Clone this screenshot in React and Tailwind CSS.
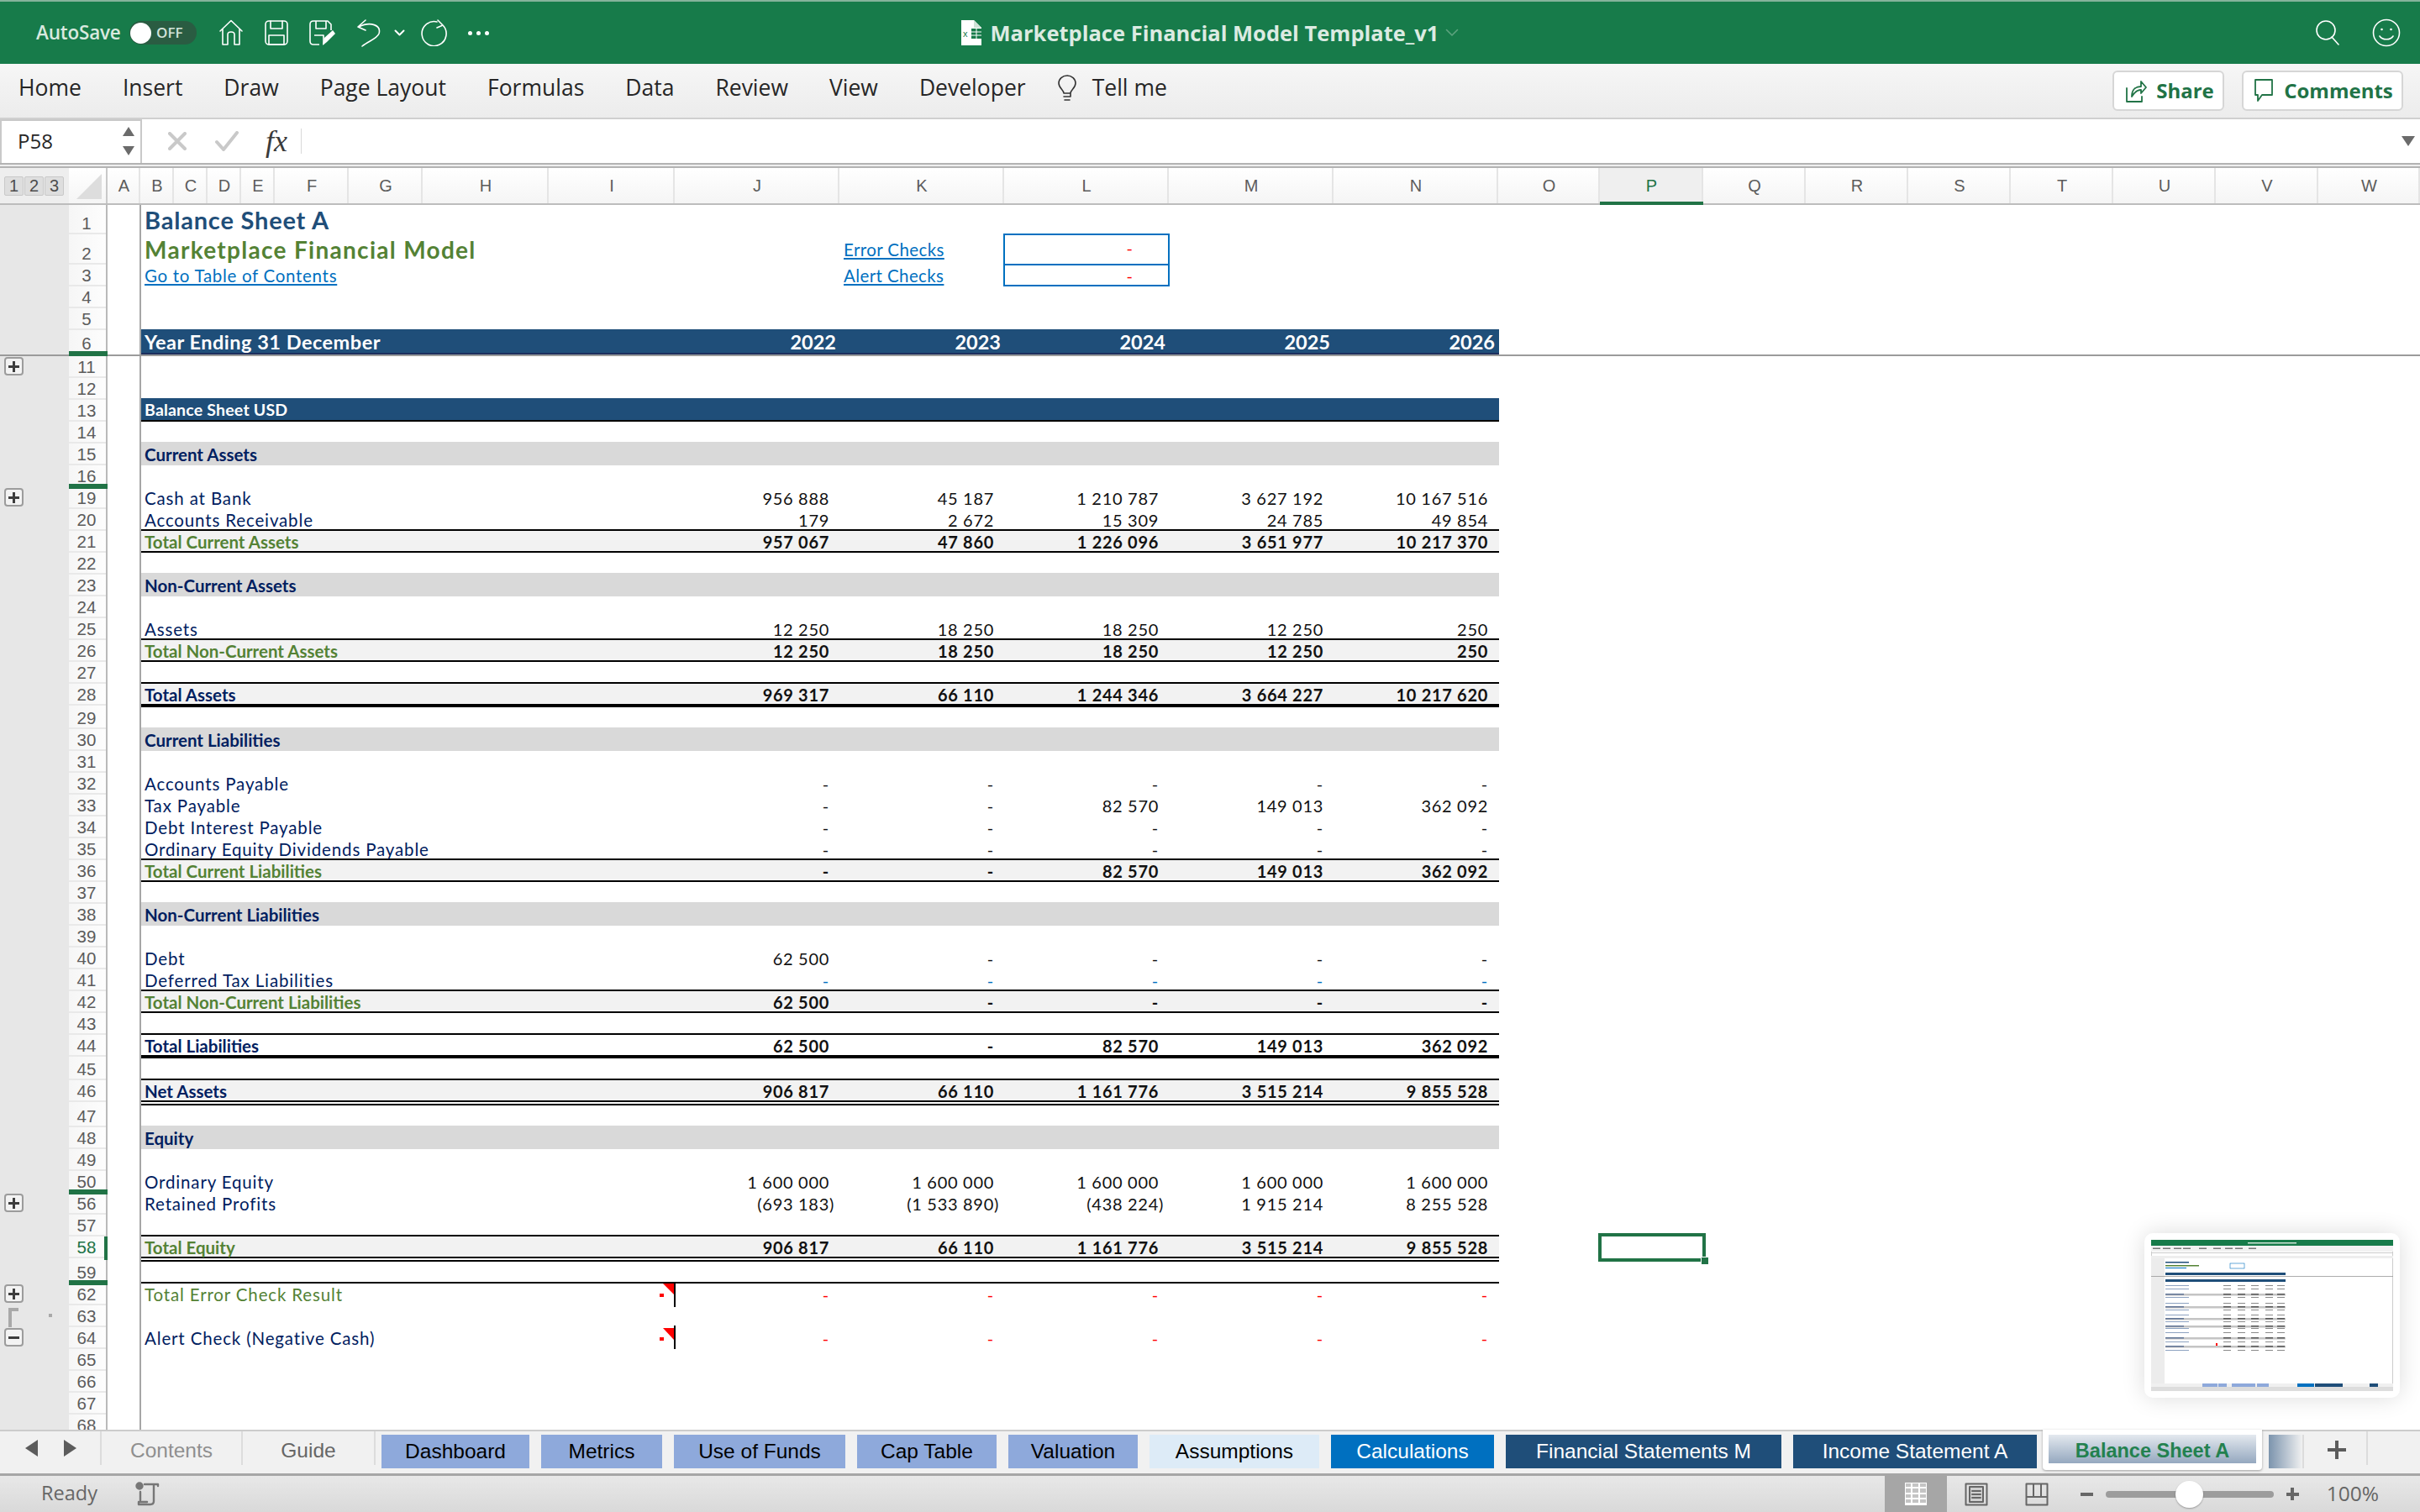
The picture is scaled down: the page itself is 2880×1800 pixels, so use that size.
import React from 'react';

const COLUMNS = [
  ['A', 'w-[39px]'], ['B', 'w-[40px]'], ['C', 'w-[40px]'], ['D', 'w-[40px]'], ['E', 'w-[40px]'],
  ['F', 'w-[88px]'], ['G', 'w-[88px]'], ['H', 'w-[150px]'], ['I', 'w-[150px]'], ['J', 'w-[196px]'],
  ['K', 'w-[196px]'], ['L', 'w-[196px]'], ['M', 'w-[196px]'], ['N', 'w-[196px]'], ['O', 'w-[121px]'],
  ['P', 'w-[123px]'], ['Q', 'w-[122px]'], ['R', 'w-[122px]'], ['S', 'w-[122px]'], ['T', 'w-[122px]'],
  ['U', 'w-[122px]'], ['V', 'w-[122px]'], ['W', 'w-[121px]'],
];

const TABS = [
  ['Dashboard', 'w-[176px] ml-[7px] bg-[#8ea9db] text-black'],
  ['Metrics', 'w-[144px] ml-[14px] bg-[#8ea9db] text-black'],
  ['Use of Funds', 'w-[204px] ml-[14px] bg-[#8ea9db] text-black'],
  ['Cap Table', 'w-[166px] ml-[14px] bg-[#8ea9db] text-black'],
  ['Valuation', 'w-[154px] ml-[14px] bg-[#8ea9db] text-black'],
  ['Assumptions', 'w-[202px] ml-[14px] bg-[#ddebf7] text-black'],
  ['Calculations', 'w-[194px] ml-[14px] bg-[#0070c0] text-white'],
  ['Financial Statements M', 'w-[328px] ml-[14px] bg-[#1f4e79] text-white'],
  ['Income Statement A', 'w-[290px] ml-[14px] bg-[#1f4e79] text-white'],
];

const D = ['-', '-', '-', '-', '-'];

const ROWS = [
  { n: 11, outline: '+' },
  { n: 12 },
  { n: 13, kind: 'band', label: 'Balance Sheet USD' },
  { n: 14 },
  { n: 15, kind: 'section', label: 'Current Assets' },
  { n: 16, hidden: true },
  { n: 19, outline: '+', label: 'Cash at Bank', v: ['956 888', '45 187', '1 210 787', '3 627 192', '10 167 516'] },
  { n: 20, line: true, label: 'Accounts Receivable', v: ['179', '2 672', '15 309', '24 785', '49 854'] },
  { n: 21, kind: 'sub', label: 'Total Current Assets', v: ['957 067', '47 860', '1 226 096', '3 651 977', '10 217 370'] },
  { n: 22 },
  { n: 23, kind: 'section', label: 'Non-Current Assets' },
  { n: 24 },
  { n: 25, line: true, label: 'Assets', v: ['12 250', '18 250', '18 250', '12 250', '250'] },
  { n: 26, kind: 'sub', label: 'Total Non-Current Assets', v: ['12 250', '18 250', '18 250', '12 250', '250'] },
  { n: 27, line: true },
  { n: 28, kind: 'total', fill: true, label: 'Total Assets', v: ['969 317', '66 110', '1 244 346', '3 664 227', '10 217 620'] },
  { n: 29 },
  { n: 30, kind: 'section', label: 'Current Liabilities' },
  { n: 31 },
  { n: 32, label: 'Accounts Payable', v: D },
  { n: 33, label: 'Tax Payable', v: ['-', '-', '82 570', '149 013', '362 092'] },
  { n: 34, label: 'Debt Interest Payable', v: D },
  { n: 35, line: true, label: 'Ordinary Equity Dividends Payable', v: D },
  { n: 36, kind: 'sub', label: 'Total Current Liabilities', v: ['-', '-', '82 570', '149 013', '362 092'] },
  { n: 37 },
  { n: 38, kind: 'section', label: 'Non-Current Liabilities' },
  { n: 39 },
  { n: 40, label: 'Debt', v: ['62 500', '-', '-', '-', '-'] },
  { n: 41, line: true, label: 'Deferred Tax Liabilities', v: D, tone: 'text-[#0070c0]' },
  { n: 42, kind: 'sub', label: 'Total Non-Current Liabilities', v: ['62 500', '-', '-', '-', '-'] },
  { n: 43, line: true },
  { n: 44, kind: 'total', label: 'Total Liabilities', v: ['62 500', '-', '82 570', '149 013', '362 092'] },
  { n: 45, line: true },
  { n: 46, kind: 'double', label: 'Net Assets', v: ['906 817', '66 110', '1 161 776', '3 515 214', '9 855 528'] },
  { n: 47 },
  { n: 48, kind: 'section', label: 'Equity' },
  { n: 49 },
  { n: 50, hidden: true, label: 'Ordinary Equity', v: ['1 600 000', '1 600 000', '1 600 000', '1 600 000', '1 600 000'] },
  { n: 56, outline: '+', label: 'Retained Profits', v: ['(693 183)', '(1 533 890)', '(438 224)', '1 915 214', '8 255 528'] },
  { n: 57, line: true },
  { n: 58, kind: 'double', green: true, selected: true, label: 'Total Equity', v: ['906 817', '66 110', '1 161 776', '3 515 214', '9 855 528'] },
  { n: 59, line: true, hidden: true },
  { n: 62, outline: '+', flag: 'flagA', labelTone: 'text-[#548235] tracking-[0.3px]', label: 'Total Error Check Result', v: D, tone: 'text-[#ff0000]' },
  { n: 63, bracket: true },
  { n: 64, outline: '-', flag: 'flagB', label: 'Alert Check (Negative Cash)', v: D, tone: 'text-[#ff0000]' },
  { n: 65 },
  { n: 66 },
  { n: 67 },
  { n: 68 },
];

const LABEL = "font-['Lato',sans-serif] text-[20.5px] tracking-[0.85px] whitespace-nowrap";
const LINK = "font-['Lato',sans-serif] text-[20.5px] tracking-[0.4px] whitespace-nowrap text-[#0070c0] underline";
const BOLD = "font-['Lato',sans-serif] text-[20.5px] font-bold tracking-[0px] whitespace-nowrap";
const NUM = "font-['Lato',sans-serif] text-[20px] tracking-[0.7px] whitespace-nowrap";

function RowNum({ n, active, end, hidden }) {
  return (
    <div className={`relative w-[46px] shrink-0 flex ${end ? 'items-end' : 'items-start'} bg-gradient-to-r from-[#f6f6f6] to-[#fdfdfd] border-r-2 border-r-[#b9b9b9] ${active ? 'bg-[#f0f0f0]' : ''}`}>
      <div className={`w-full h-[26px] border-b-2 border-b-[#e9e9e9] pr-[2px] text-center leading-[25px] font-['Liberation_Sans',sans-serif] text-[20.5px] ${active ? 'text-[#217346]' : 'text-[#5c5c5c]'}`}>
        {n}
      </div>
      {active && <div className="absolute right-[-2px] top-0 bottom-[2px] w-[4px] bg-[#217346]" />}
      {hidden && <div className="absolute left-0 right-[-2px] bottom-[-2px] h-[6px] bg-[#217346] z-10" />}
    </div>
  );
}

function OutlineBtn({ sign }) {
  return (
    <div className="ml-[5px] mt-[1px] w-[23px] h-[22px] flex items-center justify-center rounded-[4px] border-2 border-[#9c9c9c] bg-[#f3f3f3]">
      <div className="relative w-[13px] h-[3px] bg-[#3d3d3d]">
        {sign === '+' && <div className="absolute left-[5px] top-[-5px] w-[3px] h-[13px] bg-[#3d3d3d]" />}
      </div>
    </div>
  );
}

function Gutter({ row }) {
  return (
    <div className="relative w-[82px] shrink-0 bg-[#e7e7e7]">
      {row.outline && <OutlineBtn sign={row.outline} />}
      {row.bracket && (
        <>
          <div className="ml-[10px] mt-[3px] w-[12px] h-[23px] border-l-4 border-t-4 border-[#a9a9a9]" />
          <div className="absolute left-[58px] top-[10px] w-[4px] h-[4px] bg-[#a9a9a9]" />
        </>
      )}
    </div>
  );
}

function Values({ v, tone, bold }) {
  return v.map((x, i) => (
    <div
      key={i}
      className={`w-[196px] shrink-0 text-right leading-[26px] h-[26px] ${x.endsWith(')') ? 'pr-[7px]' : 'pr-[13px]'} ${bold ? `${NUM} font-bold` : NUM} ${tone || 'text-[#111111]'}`}
    >
      {x}
    </div>
  ));
}

function Flag({ variant }) {
  return (
    <div className={`absolute left-[620px] w-[16px] pointer-events-none ${variant === 'flagA' ? 'top-0 h-[26px]' : 'top-[-2px] h-[28px]'}`}>
      <svg width="16" height="28" viewBox="0 0 16 28" className="block">
        <polygon points={variant === 'flagA' ? '1,0 14,0 14,13' : '1,3 14,3 14,17'} fill="#ff0000" />
        <rect x="14" y="0" width="2" height="28" fill="#000" />
      </svg>
      <div className={`absolute left-[-3px] w-[5px] h-[4px] bg-[#ff0000] ${variant === 'flagA' ? 'top-[12px]' : 'top-[14px]'}`} />
    </div>
  );
}

function Body({ row }) {
  const { kind, label, v } = row;
  if (kind === 'band') {
    return (
      <div className="w-[1616px] h-[26px] bg-[#1f4e79] shadow-[0_-2px_0_#1f4e79] border-b-2 border-black pl-[4px] text-white">
        <span className="font-['Lato',sans-serif] font-bold tracking-[0.2px] leading-[24px] text-[19.5px] whitespace-nowrap">{label}</span>
      </div>
    );
  }
  if (kind === 'section') {
    return (
      <div className="w-[1616px] h-[26px] bg-[#d9d9d9] shadow-[0_-2px_0_#d9d9d9] pl-[4px] text-[#002060]">
        <span className={`${BOLD} leading-[26px]`}>{label}</span>
      </div>
    );
  }
  if (kind === 'sub' || kind === 'total') {
    const cls = kind === 'sub'
      ? 'h-[26px] bg-[#f2f2f2] border-b-2 text-[#548235]'
      : `h-[28px] border-b-4 text-[#002060] ${row.fill ? 'bg-[#f2f2f2]' : ''}`;
    return (
      <div className={`w-[1616px] flex border-black ${cls}`}>
        <div className={`w-[636px] shrink-0 pl-[4px] leading-[26px] ${BOLD}`}>{label}</div>
        <Values v={v} bold />
      </div>
    );
  }
  if (kind === 'double') {
    return (
      <div className="w-[1616px] h-[30px] border-b-2 border-black">
        <div className={`h-[26px] flex bg-[#f2f2f2] border-b-2 border-black ${row.green ? 'text-[#548235]' : 'text-[#002060]'}`}>
          <div className={`w-[636px] shrink-0 pl-[4px] leading-[26px] ${BOLD}`}>{label}</div>
          <Values v={v} bold />
        </div>
      </div>
    );
  }
  return (
    <div className={`w-[1616px] h-[26px] flex ${row.line ? 'border-b-2 border-black' : ''}`}>
      {label && <div className={`w-[636px] shrink-0 pl-[4px] leading-[26px] ${LABEL} ${row.labelTone || 'text-[#002060]'}`}>{label}</div>}
      {v && <Values v={v} tone={row.tone} />}
    </div>
  );
}

function SheetRow({ row }) {
  const h = row.kind === 'total' ? 'h-[28px]' : row.kind === 'double' ? 'h-[30px]' : 'h-[26px]';
  return (
    <div className={`relative flex ${h}`}>
      <Gutter row={row} />
      <RowNum n={row.n} active={row.selected} hidden={row.hidden} />
      <div className="w-[38px] shrink-0 border-r-2 border-r-[#a6a6a6] box-content" />
      <div className="relative">
        <Body row={row} />
        {row.flag && <Flag variant={row.flag} />}
      </div>
      {row.selected && (
        <div className="absolute left-[1902px] top-[-4px] w-[128px] h-[34px] border-4 border-[#217346] z-20">
          <div className="absolute right-[-8px] bottom-[-8px] w-[10px] h-[10px] bg-[#217346] border border-white" />
        </div>
      )}
    </div>
  );
}

function TopRow({ n, h, children }) {
  return (
    <div className={`flex ${h}`}>
      <div className="w-[82px] shrink-0 bg-[#e7e7e7]" />
      <RowNum n={n} end />
      <div className="w-[38px] shrink-0 border-r-2 border-r-[#a6a6a6] box-content" />
      <div className="w-[1616px] flex">{children}</div>
    </div>
  );
}

const Stroke = ({ children, w, h, vb, sw = 1.6, className = '', color = '#ffffff' }) => (
  <svg width={w} height={h} viewBox={vb} fill="none" stroke={color} strokeWidth={sw} strokeLinejoin="round" strokeLinecap="round" className={`block shrink-0 ${className}`}>
    {children}
  </svg>
);

function TitleBar() {
  return (
    <div className="h-[76px] shrink-0 grid grid-cols-[1fr_auto_1fr] items-center bg-[#177b4a] border-t-2 border-t-[#85b39b]">
      <div className="flex items-center pl-[43px]">
        <span className="font-['Open_Sans',sans-serif] font-semibold text-[22.5px] tracking-[-0.2px] text-[#d9e9df] w-[111px] whitespace-nowrap">AutoSave</span>
        <div className="w-[80px] h-[28px] rounded-full bg-[#2a5c42] flex items-center pl-[1px]">
          <div className="w-[25px] h-[25px] rounded-full bg-white" />
          <span className="ml-[6px] font-['Open_Sans',sans-serif] font-semibold text-[17px] text-[#d3e3da]">OFF</span>
        </div>
        <Stroke w={30} h={32} vb="0 0 30 32" className="ml-[26px]">
          <path d="M2 14 15 1.500 28 14M5 11V30H11V18C11 14 19 14 19 18V30H25V11" />
        </Stroke>
        <Stroke w={30} h={32} vb="0 0 30 32" className="ml-[24px]">
          <rect x="2" y="2" width="26" height="28" rx="4" />
          <path d="M8 2V11H22V2M6 19H24V30H6Z" />
        </Stroke>
        <svg width="32" height="32" viewBox="0 0 32 32" className="ml-[23px] block">
          <g fill="none" stroke="#fff" strokeWidth="1.6" strokeLinejoin="round">
            <path d="M27 13V6L23 2H6Q2 2 2 6V26Q2 30 6 30H13" />
            <path d="M9 2V11H21V2M7 19H18V30" />
          </g>
          <path d="M17 31 19 22 29 13 32 17 22 27Z" fill="#fff" />
        </svg>
        <Stroke w={30} h={34} vb="0 0 30 34" className="ml-[25px]">
          <path d="M11 2 2 10 11 14M3 10C17 3 30 8 27 18 25 24 14 27 7 33" />
        </Stroke>
        <Stroke w={13} h={8} vb="0 0 13 8" className="ml-[15px]" sw={2}>
          <path d="M1.500 1.500 6.500 6.500 11.500 1.500" />
        </Stroke>
        <Stroke w={32} h={32} vb="0 0 32 32" className="ml-[19px]">
          <path d="M19 3A14.500 14.500 0 1 0 26 7M20 1 26 7 19 10" />
        </Stroke>
        <div className="ml-[24px] flex gap-[5px]">
          <div className="w-[5px] h-[5px] rounded-full bg-white" />
          <div className="w-[5px] h-[5px] rounded-full bg-white" />
          <div className="w-[5px] h-[5px] rounded-full bg-white" />
        </div>
      </div>
      <div className="flex items-center">
        <svg width="24" height="30" viewBox="0 0 24 30" className="block mr-[11px]">
          <path d="M0 0H15L24 9V30H0Z" fill="#fff" />
          <path d="M15 0 24 9H15Z" fill="#cfe3d7" />
          <rect x="12" y="10" width="12" height="12" fill="#177b4a" />
          <path d="M12 14H24M12 18H24M18 10V22" stroke="#fff" strokeWidth="1" />
          <text x="2" y="20" fontSize="11" fill="#177b4a" fontFamily="Liberation Sans, sans-serif">x</text>
        </svg>
        <span className="font-['Open_Sans',sans-serif] font-bold text-[25.500px] text-[#dcebe2] whitespace-nowrap">Marketplace Financial Model Template_v1</span>
        <Stroke w={16} h={10} vb="0 0 16 10" className="ml-[8px]" sw={1.6} color="#5ea37f">
          <path d="M1.500 1.500 8 8 14.500 1.500" />
        </Stroke>
      </div>
      <div className="flex items-center justify-end pr-[23px]">
        <Stroke w={30} h={30} vb="0 0 30 30">
          <circle cx="12" cy="12" r="11" />
          <path d="M19 20 27 29" />
        </Stroke>
        <Stroke w={34} h={34} vb="0 0 34 34" className="ml-[37px]">
          <circle cx="17" cy="17" r="15.500" />
          <circle cx="11.500" cy="13" r="1.300" fill="#fff" stroke="none" />
          <circle cx="22.500" cy="13" r="1.300" fill="#fff" stroke="none" />
          <path d="M9 21C12 26 22 26 25 21" />
        </Stroke>
      </div>
    </div>
  );
}

function Ribbon() {
  return (
    <div className="h-[66px] shrink-0 flex items-center justify-between bg-gradient-to-b from-[#f6f6f6] to-[#ececec] border-b-2 border-b-[#cfcfcf] pl-[22px] pr-[20px]">
      <div className="flex items-center gap-[49px] pb-[7px] font-['Open_Sans',sans-serif] font-medium text-[26.500px] text-[#262626]">
        <span>Home</span>
        <span>Insert</span>
        <span>Draw</span>
        <span>Page Layout</span>
        <span>Formulas</span>
        <span>Data</span>
        <span>Review</span>
        <span>View</span>
        <span>Developer</span>
        <span className="flex items-center -ml-[12px]">
          <Stroke w={24} h={32} vb="0 0 24 32" color="#333" className="mr-[18px]">
            <path d="M8 22C8 18 2 16 2 10A10 9 0 0 1 22 10C22 16 16 18 16 22ZM8 26H16V22M9 30H15" />
          </Stroke>
          Tell me
        </span>
      </div>
      <div className="flex items-center gap-[21px] font-['Open_Sans',sans-serif] font-bold text-[24px] text-[#217346]">
        <div className="w-[133px] h-[48px] flex items-center justify-center gap-[11px] pl-[3px] rounded-[6px] border-2 border-[#d6d6d6] bg-white">
          <Stroke w={26} h={30} vb="0 0 26 30" color="#217346" sw={1.800}>
            <path d="M2 12V28H20V22M8 22C8 14 12 10 19 10V4L25 11 19 18V14C14 14 11 17 8 22Z" />
          </Stroke>
          Share
        </div>
        <div className="w-[192px] h-[48px] flex items-center justify-center gap-[12px] pl-[2px] rounded-[6px] border-2 border-[#d6d6d6] bg-white">
          <Stroke w={24} h={30} vb="0 0 24 30" color="#217346" sw={1.800}>
            <path d="M2 2H22V20H10L5 27V20H2Z" />
          </Stroke>
          Comments
        </div>
      </div>
    </div>
  );
}

function FormulaBar() {
  return (
    <div className="h-[52px] shrink-0 flex items-stretch bg-white">
      <div className="w-[169px] shrink-0 flex items-center justify-between border-2 border-b-0 border-[#c9c9c9] pl-[19px] pr-[7px] pb-[2px] font-['Open_Sans',sans-serif] text-[24px] text-[#262626]">
        P58
        <div className="flex flex-col gap-[12px]">
          <div className="w-0 h-0 border-x-[7px] border-x-transparent border-b-[11px] border-b-[#6b6b6b]" />
          <div className="w-0 h-0 border-x-[7px] border-x-transparent border-t-[11px] border-t-[#6b6b6b]" />
        </div>
      </div>
      <div className="flex items-center flex-1 pl-[31px] pr-[6px]">
        <Stroke w={22} h={22} vb="0 0 22 22" color="#c9c9c9" sw={4}>
          <path d="M2 2 20 20M20 2 2 20" />
        </Stroke>
        <Stroke w={28} h={24} vb="0 0 28 24" color="#c9c9c9" sw={4} className="ml-[34px]">
          <path d="M2 13 10 22 26 2" />
        </Stroke>
        <span className="ml-[32px] font-['Liberation_Serif',serif] italic text-[36px] leading-none text-[#3a3a3a]">fx</span>
        <div className="ml-[16px] w-[1px] h-[30px] bg-[#d9d9d9]" />
        <div className="flex-1" />
        <div className="w-0 h-0 border-x-[8px] border-x-transparent border-t-[12px] border-t-[#6b6b6b]" />
      </div>
    </div>
  );
}

function ColumnHeader() {
  return (
    <div className="h-[44px] shrink-0 flex bg-gradient-to-b from-[#ffffff] to-[#f5f5f5] border-b-2 border-b-[#bdbdbd]">
      <div className="w-[82px] shrink-0 bg-[#eeeeee] flex items-center pl-[5px]">
        {['1', '2', '3'].map((x) => (
          <div key={x} className="w-[23px] h-[23px] mr-px bg-[#dedede] border border-[#c9c9c9] rounded-[2px] text-center leading-[21px] font-['Liberation_Sans',sans-serif] text-[20px] text-[#4d4d4d]">{x}</div>
        ))}
      </div>
      <div className="w-[46px] shrink-0 flex items-end justify-end pr-[5px] pb-[5px] border-r-2 border-r-[#c9c9c9]">
        <div className="w-0 h-0 border-l-[30px] border-l-transparent border-b-[30px] border-b-[#dddddd]" />
      </div>
      {COLUMNS.map(([c, w]) => (
        <div
          key={c}
          className={`relative ${w} shrink-0 pl-[2px] text-center leading-[42px] font-['Liberation_Sans',sans-serif] text-[20px] border-r-2 border-r-[#e5e5e5] ${c === 'P' ? 'bg-[#efefef] text-[#217346]' : 'text-[#5c5c5c]'}`}
        >
          {c}
          {c === 'P' && <div className="absolute left-0 right-[-2px] bottom-[-2px] h-[4px] bg-[#217346]" />}
        </div>
      ))}
    </div>
  );
}

function Sheet() {
  return (
    <div className="flex-1 min-h-0 overflow-hidden bg-white relative">
      <TopRow n={1} h="h-[35px]">
        <div className="pl-[4px] self-end h-[26px] leading-[26px] mb-[4px] font-['Lato',sans-serif] font-bold text-[29px] tracking-[0.8px] text-[#1f4e79] whitespace-nowrap">Balance Sheet A</div>
      </TopRow>
      <TopRow n={2} h="h-[36px]">
        <div className="w-[636px] shrink-0 pl-[4px] self-end h-[26px] leading-[26px] mb-[5px] font-['Lato',sans-serif] font-bold text-[28px] tracking-[1.3px] text-[#548235] whitespace-nowrap">Marketplace Financial Model</div>
        <div className="w-[196px]" />
        <div className={`w-[196px] self-end h-[26px] leading-[26px] pl-[4px] mb-[5px] ${LINK}`}>Error Checks</div>
        <div className="-ml-[2px] -mt-[1px] w-[198px] h-[37px] flex items-end justify-end pr-[42px] pb-[5px] border-2 border-b-0 border-[#0070c0] text-[#ff0000] font-['Lato',sans-serif] text-[20px]">-</div>
      </TopRow>
      <TopRow n={3} h="h-[26px]">
        <div className={`w-[636px] shrink-0 pl-[4px] leading-[26px] ${LINK} tracking-[0.7px]`}>Go to Table of Contents</div>
        <div className="w-[196px]" />
        <div className={`w-[196px] leading-[26px] pl-[4px] ${LINK}`}>Alert Checks</div>
        <div className="-ml-[2px] -mt-[1px] w-[198px] h-[27px] flex items-center justify-end pr-[42px] border-2 border-[#0070c0] text-[#ff0000] font-['Lato',sans-serif] text-[20px]">-</div>
      </TopRow>
      <TopRow n={4} h="h-[26px]" />
      <TopRow n={5} h="h-[26px]" />
      <div className="relative flex h-[29px]">
        <div className="w-[82px] shrink-0 bg-[#e7e7e7]" />
        <RowNum n={6} end hidden />
        <div className="w-[38px] shrink-0 border-r-2 border-r-[#a6a6a6] box-content" />
        <div className="w-[1616px] flex bg-[#1f4e79] shadow-[0_-1px_0_#1f4e79] border-b-2 border-b-[#1d2f5e] text-white font-['Lato',sans-serif] font-bold">
          <div className="w-[636px] shrink-0 pl-[4px] leading-[28px] text-[23.500px] tracking-[0.5px] whitespace-nowrap">Year Ending 31 December</div>
          {['2022', '2023', '2024', '2025', '2026'].map((y) => (
            <div key={y} className="w-[196px] shrink-0 pr-[5px] text-right leading-[28px] text-[23.500px]">{y}</div>
          ))}
        </div>
      </div>
      <div className="h-[2px] bg-[#9b9b9b]" />
      {ROWS.map((r) => <SheetRow key={r.n} row={r} />)}
    </div>
  );
}

function SheetTabs() {
  return (
    <div className="h-[52px] shrink-0 flex items-start bg-[#f1f1f1] border-t-2 border-t-[#cccccc] font-['Liberation_Sans',sans-serif] text-[24.500px] relative">
      <div className="w-[121px] h-[40px] shrink-0 flex items-center border-r-2 border-r-[#dcdcdc]">
        <div className="ml-[30px] w-0 h-0 border-y-[10px] border-y-transparent border-r-[15px] border-r-[#5c5c5c]" />
        <div className="ml-[31px] w-0 h-0 border-y-[10px] border-y-transparent border-l-[15px] border-l-[#5c5c5c]" />
      </div>
      <div className="w-[168px] h-[40px] shrink-0 flex items-center justify-center text-[#8f8f8f] border-r-2 border-r-[#dcdcdc] leading-none pt-[6px]">Contents</div>
      <div className="w-[158px] h-[40px] shrink-0 flex items-center justify-center text-[#666666] border-r-2 border-r-[#dcdcdc] leading-none pt-[6px]">Guide</div>
      {TABS.map(([name, cls]) => (
        <div key={name} className={`h-[40px] mt-[4px] shrink-0 flex items-center justify-center whitespace-nowrap ${cls}`}>{name}</div>
      ))}
      <div className="ml-[7px] w-[261px] h-[48px] -mt-[2px] shrink-0 bg-white rounded-b-[4px] shadow-[0_1px_3px_rgba(0,0,0,0.35)] pt-[6px] px-[7px]">
        <div className="h-[34px] pt-[5px] flex items-center justify-center bg-gradient-to-b from-[#e4e9ef] to-[#95a8bf] text-[#23814f] font-bold text-[23.500px] whitespace-nowrap">Balance Sheet A</div>
      </div>
      <div className="ml-[8px] mt-[4px] w-[42px] h-[40px] shrink-0 bg-gradient-to-r from-[#7c94ad] to-[#f1f1f1] border-r-2 border-r-[#dcdcdc]" />
      <div className="w-[76px] h-[40px] pl-[4px] shrink-0 flex items-center justify-center border-r-2 border-r-[#dcdcdc]">
        <div className="relative w-[22px] h-[4px] bg-[#5c5c5c] mt-[4px]">
          <div className="absolute left-[9px] top-[-9px] w-[4px] h-[22px] bg-[#5c5c5c]" />
        </div>
      </div>
    </div>
  );
}

function StatusBar() {
  return (
    <div className="h-[46px] shrink-0 flex items-center bg-gradient-to-b from-[#e8e8e8] to-[#d9d9d9] border-t-[3px] border-t-[#a6a6a6]">
      <span className="ml-[49px] w-[112px] pb-[2px] font-['Open_Sans',sans-serif] text-[23.500px] text-[#666666]">Ready</span>
      <Stroke w={30} h={30} vb="0 0 30 30" color="#777777" sw={2.400}>
        <circle cx="5" cy="5" r="3.500" fill="#777777" />
        <path d="M11 3H27V5M22 3V23Q22 27 18 27H4V24H14M6 12V22" />
      </Stroke>
      <div className="flex-1" />
      <div className="w-[74px] h-full bg-[#a6a6a6] flex items-center justify-center">
        <div className="w-[26px] h-[27px] bg-white grid grid-cols-3 grid-rows-4 gap-[2px] p-[1px] border-b-2 border-[#ffffff]">
          {Array.from({ length: 12 }).map((_, i) => <div key={i} className="bg-[#c4c4c4]" />)}
        </div>
      </div>
      <Stroke w={28} h={28} vb="0 0 28 28" color="#666666" sw={2} className="ml-[21px]">
        <rect x="1.500" y="1.500" width="25" height="25" />
        <rect x="6" y="5" width="16" height="18" fill="#cfcfcf" />
        <path d="M9 10H19M9 14H19M9 18H19" />
      </Stroke>
      <Stroke w={28} h={28} vb="0 0 28 28" color="#666666" sw={2} className="ml-[44px]">
        <path d="M1.500 1.500H26.500V26.500H1.500ZM1.500 17H26.500M10 1.500V17M19 1.500V17" />
      </Stroke>
      <div className="ml-[38px] w-[15px] h-[4px] bg-[#666666]" />
      <div className="relative ml-[15px] w-[200px] h-[8px] rounded-full bg-[#9c9c9c]">
        <div className="absolute left-[83px] top-[-12px] w-[33px] h-[32px] rounded-full bg-white shadow-[0_1px_2px_rgba(0,0,0,0.3)]" />
      </div>
      <div className="relative ml-[15px] w-[15px] h-[4px] bg-[#666666]">
        <div className="absolute left-[5.5px] top-[-6px] w-[4px] h-[15px] bg-[#666666]" />
      </div>
      <span className="ml-[33px] mr-[49px] font-['Open_Sans',sans-serif] text-[24.500px] text-[#666666]">100%</span>
    </div>
  );
}

// tiny preview of another sheet, reads as a picture only
function Thumbnail() {
  const lines = [78, 82, 92, 99, 107, 113, 121, 129, 134, 145, 155];
  const filled = [88, 103, 117, 126, 140, 150];
  const cols = [86, 103, 119, 136, 150];
  return (
    <div className="absolute left-[2552px] top-[1468px] w-[304px] h-[196px] p-[8px] rounded-[10px] bg-white shadow-[0_0_28px_rgba(0,0,0,0.14)] z-30">
      <svg width="288" height="180" viewBox="0 0 288 180" className="block blur-[0.6px]">
        <rect width="288" height="180" fill="#fff" stroke="#999" />
        <rect width="288" height="7" fill="#177b4a" />
        <rect x="115" y="3" width="58" height="1.500" fill="#cfe3d7" />
        <rect y="7" width="288" height="7" fill="#f2f2f2" />
        {[2, 14, 27, 38, 57, 74, 88, 100, 116].map((x) => <rect key={x} x={x} y="9.500" width="9" height="1.500" fill="#777" />)}
        <rect y="15" width="288" height="1" fill="#ccc" />
        <rect y="19" width="288" height="3" fill="#eee" />
        <rect y="22" width="16" height="150" fill="#ececec" />
        <rect x="17" y="26" width="28" height="1.500" fill="#1f4e79" />
        <rect x="17" y="30" width="40" height="1.500" fill="#548235" />
        <rect x="17" y="33" width="25" height="1" fill="#0070c0" />
        <rect x="94" y="28" width="17" height="6" fill="none" stroke="#0070c0" strokeWidth="0.6" />
        <rect x="17" y="39" width="143" height="3" fill="#1f4e79" />
        <rect y="43" width="288" height="0.800" fill="#999" />
        <rect x="17" y="47" width="143" height="3" fill="#1f4e79" />
        {lines.map((y) => (
          <g key={y}>
            <rect x="17" y={y - 24} width="28" height="1" fill="#8da2c0" />
            {cols.map((x) => <rect key={x} x={x} y={y - 24} width="9" height="1" fill="#8a8a8a" />)}
          </g>
        ))}
        {filled.map((y) => (
          <g key={y}>
            <rect x="17" y={y - 24} width="143" height="2.500" fill="#c4c4c4" />
            <rect x="17" y={y - 24} width="22" height="1.500" fill="#5f7395" />
            {cols.map((x) => <rect key={x} x={x} y={y - 24} width="9" height="1.500" fill="#555" />)}
          </g>
        ))}
        <rect x="77" y="123" width="2" height="3" fill="#ff0000" />
        <rect y="171" width="288" height="4" fill="#f0f0f0" />
        <rect x="61" y="171" width="18" height="4" fill="#8ea9db" />
        <rect x="80" y="171" width="10" height="4" fill="#8ea9db" />
        <rect x="96" y="171" width="28" height="4" fill="#8ea9db" />
        <rect x="126" y="171" width="14" height="4" fill="#8ea9db" />
        <rect x="174" y="171" width="20" height="4" fill="#0070c0" />
        <rect x="195" y="171" width="33" height="4" fill="#1f4e79" />
        <rect x="260" y="171" width="10" height="4" fill="#1f4e79" />
        <rect y="175" width="288" height="5" fill="#dddddd" />
      </svg>
    </div>
  );
}

export default function App() {
  return (
    <div className="relative w-[2880px] h-[1800px] flex flex-col overflow-hidden bg-white">
      <TitleBar />
      <Ribbon />
      <FormulaBar />
      <div className="h-[6px] shrink-0 bg-[#eeeeee] border-y-2 border-y-[#b3b3b3]" />
      <ColumnHeader />
      <Sheet />
      <SheetTabs />
      <StatusBar />
      <Thumbnail />
    </div>
  );
}
